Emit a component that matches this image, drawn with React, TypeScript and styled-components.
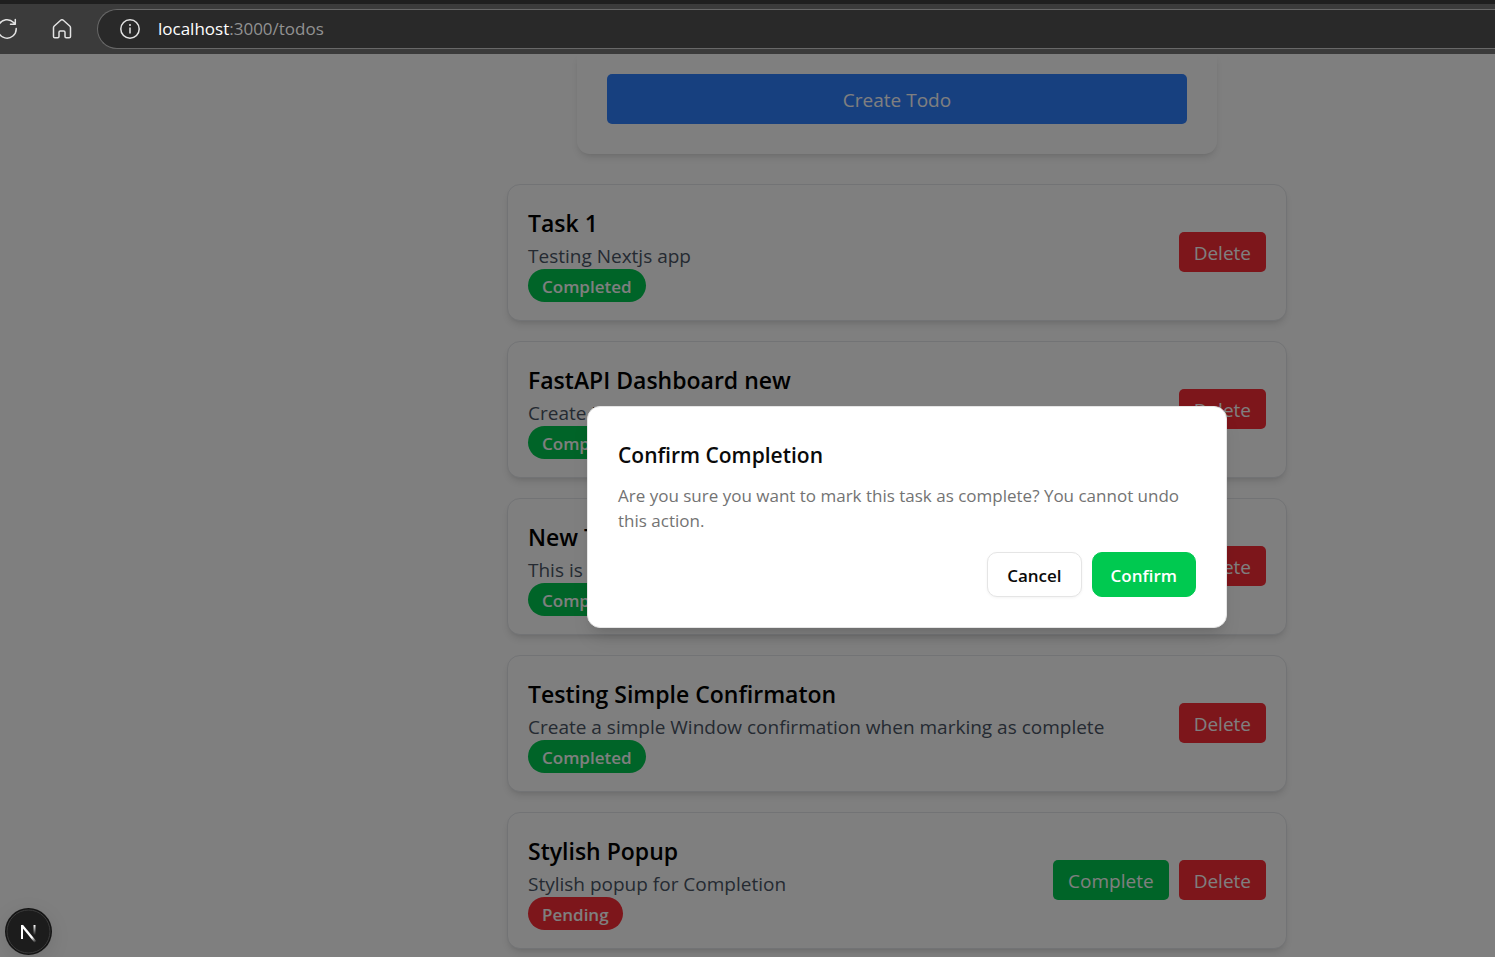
import React from "react";
import styled, { createGlobalStyle } from "styled-components";

const GlobalStyle = createGlobalStyle`
  *, *::before, *::after { box-sizing: border-box; }
  html, body { margin: 0; height: 100%; overflow: hidden; }
  body { font-family: "Open Sans", "Noto Sans", sans-serif; background: #fff; color: #000; }
  #root { height: 100%; }
  h2, p, ul { margin: 0; padding: 0; }
  button { font-family: inherit; cursor: pointer; }
`;

const Browser = styled.div`
  height: 100%;
  display: flex;
  flex-direction: column;
`;

const Toolbar = styled.header`
  flex: none;
  display: flex;
  align-items: center;
  height: 54px;
  border-top: 4px solid #1f1f1f;
  background: #3b3b3b;
  overflow: hidden;
`;

const ToolButton = styled.button<{ $clipped?: boolean }>`
  flex: none;
  display: flex;
  padding: 0;
  margin-left: ${(p) => (p.$clipped ? "-4px" : "34px")};
  border: 0;
  background: none;
  color: #e3e3e3;
`;

const AddressBar = styled.div`
  flex: 1;
  display: flex;
  align-items: center;
  gap: 18px;
  height: 40px;
  margin-left: 25px;
  padding-left: 22px;
  border: 1px solid #686868;
  border-right: 0;
  border-radius: 20px 0 0 20px;
  background: #292929;
  color: #e3e3e3;
`;

const Address = styled.a`
  font-size: 17px;
  line-height: 24px;
  color: #929292;
  text-decoration: none;
`;

const Host = styled.span`
  color: #fff;
`;

const Viewport = styled.div`
  flex: 1;
  min-height: 0;
  position: relative;
  overflow: hidden;
`;

const Page = styled.main`
  display: flex;
  flex-direction: column;
  align-items: center;
  gap: 30px;
  padding-left: 299px;
`;

const FormCard = styled.form`
  width: 100%;
  max-width: 640px;
  padding: 20px 30px 30px;
  border-radius: 0 0 13px 13px;
  background: #fff;
  box-shadow: 0 5px 8px -1px rgba(0, 0, 0, 0.1), 0 3px 5px -3px rgba(0, 0, 0, 0.1);
`;

const palette = { blue: "#2f80ff", green: "#00c950", red: "#fb2c36" };
type Tone = keyof typeof palette;

const Action = styled.button<{ $tone: Tone; $wide?: boolean }>`
  display: block;
  width: ${(p) => (p.$wide ? "100%" : "auto")};
  padding: ${(p) => (p.$wide ? "11px 10px 9px" : "6px 15px 4px")};
  border: 0;
  border-radius: 5px;
  background: ${(p) => palette[p.$tone]};
  color: #fff;
  font-size: 19px;
  line-height: 30px;
`;

const List = styled.ul`
  display: flex;
  flex-direction: column;
  gap: 20px;
  width: 100%;
  max-width: 780px;
  list-style: none;
`;

const Card = styled.li`
  display: flex;
  align-items: center;
  justify-content: space-between;
  padding: 21px 20px 19px;
  border: 1px solid #e5e7eb;
  border-radius: 13px;
  background: #fff;
  box-shadow: 0 5px 8px -1px rgba(0, 0, 0, 0.1), 0 3px 5px -3px rgba(0, 0, 0, 0.1);
`;

const Title = styled.h2`
  font-size: 23px;
  line-height: 35px;
  font-weight: 600;
`;

const Description = styled.p`
  font-size: 19px;
  line-height: 30px;
  color: #4a5565;
`;

const Badge = styled.span<{ $tone: Tone }>`
  display: block;
  width: fit-content;
  margin: -2px 0 -1px;
  padding: 6px 14px 4px;
  border-radius: 17px;
  background: ${(p) => palette[p.$tone]};
  color: #fff;
  font-size: 17px;
  line-height: 23px;
  font-weight: 600;
`;

const Actions = styled.div`
  display: flex;
  gap: 10px;
  padding-bottom: 3px;
`;

const Overlay = styled.div`
  position: absolute;
  inset: 0;
  display: flex;
  align-items: center;
  justify-content: center;
  padding: 23px 0 0 319px;
  background: rgba(0, 0, 0, 0.5);
`;

const Dialog = styled.section`
  display: flex;
  flex-direction: column;
  gap: 19px;
  width: 100%;
  max-width: 640px;
  padding: 31px 30px 30px;
  border: 1px solid #e5e5e5;
  border-radius: 13px;
  background: #fff;
  box-shadow: 0 13px 19px -4px rgba(0, 0, 0, 0.1), 0 5px 8px -5px rgba(0, 0, 0, 0.1);
`;

const DialogText = styled.div`
  display: flex;
  flex-direction: column;
  gap: 10px;
`;

const DialogTitle = styled.h2`
  font-size: 21px;
  line-height: 35px;
  font-weight: 600;
  color: #0a0a0a;
`;

const DialogBody = styled.p`
  font-size: 17px;
  line-height: 25px;
  color: #737373;
`;

const DialogActions = styled.div`
  display: flex;
  justify-content: flex-end;
  gap: 10px;
`;

const DialogButton = styled.button<{ $primary?: boolean }>`
  height: 45px;
  padding: 2px ${(p) => (p.$primary ? "18px" : "19px")} 0;
  border: 1px solid ${(p) => (p.$primary ? palette.green : "#e5e5e5")};
  border-radius: 10px;
  background: ${(p) => (p.$primary ? palette.green : "#fff")};
  color: ${(p) => (p.$primary ? "#fff" : "#0a0a0a")};
  box-shadow: ${(p) => (p.$primary ? "none" : "0 1px 3px rgba(0, 0, 0, 0.05)")};
  font-size: 17px;
  line-height: 25px;
  font-weight: 600;
`;

const DevBadge = styled.button`
  position: absolute;
  left: 5px;
  bottom: 2px;
  display: flex;
  padding: 0;
  border: 0;
  border-radius: 50%;
  background: none;
  box-shadow: 0 5px 20px rgba(0, 0, 0, 0.1);
`;

const todos = [
  { title: "Task 1", text: "Testing Nextjs app", done: true },
  { title: "FastAPI Dashboard new", text: "Create Nextjs app that runs called", done: true },
  { title: "New Task", text: "This is a new task", done: true },
  {
    title: "Testing Simple Confirmaton",
    text: "Create a simple Window confirmation when marking as complete",
    done: true,
  },
  { title: "Stylish Popup", text: "Stylish popup for Completion", done: false },
];

const ReloadIcon = () => (
  <svg width="22" height="22" viewBox="0 0 22 22" fill="none" stroke="currentColor" strokeWidth="1.5" strokeLinecap="round" strokeLinejoin="round">
    <path d="M20.2 10.5a9.2 9.2 0 1 1-2.6-6l1.7 1.8M19.3 1.5v4.8h-4.8" />
  </svg>
);

const HomeIcon = () => (
  <svg width="20" height="20" viewBox="0 0 20 20" fill="none" stroke="currentColor" strokeWidth="1.5" strokeLinejoin="round">
    <path d="M1.5 8.7c0-.7.3-1.2.8-1.7l6.4-5.7a2 2 0 0 1 2.6 0l6.4 5.7c.5.5.8 1 .8 1.7v8.8c0 .8-.5 1.3-1.3 1.3h-3c-.7 0-1.2-.5-1.2-1.2v-4.3c0-.8-.5-1.3-1.3-1.3H8.300c-.8 0-1.3.5-1.3 1.3v4.3c0 .7-.5 1.2-1.2 1.2h-3c-.8 0-1.3-.5-1.3-1.3z" />
  </svg>
);

const InfoIcon = () => (
  <svg width="20" height="20" viewBox="0 0 20 20" fill="none" stroke="currentColor" strokeWidth="1.5">
    <circle cx="10" cy="10" r="9.2" />
    <path d="M10 8.5v6" />
    <circle cx="10" cy="6" r="1" fill="currentColor" stroke="none" />
  </svg>
);

const NextLogo = () => (
  <svg width="47" height="47" viewBox="0 0 47 47" fill="none">
    <defs>
      <linearGradient id="diagonal" x1="24" y1="24" x2="31" y2="34" gradientUnits="userSpaceOnUse">
        <stop offset="0.5" stopColor="#fff" />
        <stop offset="1" stopColor="#fff" stopOpacity="0" />
      </linearGradient>
      <linearGradient id="stem" x1="30" y1="17" x2="30" y2="27" gradientUnits="userSpaceOnUse">
        <stop offset="0" stopColor="#fff" />
        <stop offset="1" stopColor="#fff" stopOpacity="0" />
      </linearGradient>
    </defs>
    <circle cx="23.5" cy="23.5" r="23.5" fill="#141414" />
    <circle cx="23.5" cy="23.5" r="21.5" fill="#1c1c1c" stroke="#3b3b3b" />
    <path d="M17 31V17" stroke="#fff" strokeWidth="2" />
    <path d="M17 17.5L30.5 34" stroke="url(#diagonal)" strokeWidth="2.4" />
    <path d="M29.5 17v10" stroke="url(#stem)" strokeWidth="2" />
  </svg>
);

export default function App() {
  return (
    <Browser>
      <GlobalStyle />
      <Toolbar>
        <ToolButton $clipped aria-label="Reload">
          <ReloadIcon />
        </ToolButton>
        <ToolButton aria-label="Home">
          <HomeIcon />
        </ToolButton>
        <AddressBar>
          <InfoIcon />
          <Address href="#todos">
            <Host>localhost</Host>:3000/todos
          </Address>
        </AddressBar>
      </Toolbar>
      <Viewport>
        <Page>
          <FormCard onSubmit={(e) => e.preventDefault()}>
            <Action $tone="blue" $wide type="submit">
              Create Todo
            </Action>
          </FormCard>
          <List>
            {todos.map((todo) => (
              <Card key={todo.title}>
                <div>
                  <Title>{todo.title}</Title>
                  <Description>{todo.text}</Description>
                  <Badge $tone={todo.done ? "green" : "red"}>{todo.done ? "Completed" : "Pending"}</Badge>
                </div>
                <Actions>
                  {!todo.done && <Action $tone="green">Complete</Action>}
                  <Action $tone="red">Delete</Action>
                </Actions>
              </Card>
            ))}
          </List>
        </Page>
        <Overlay>
          <Dialog role="alertdialog" aria-labelledby="dialog-title" aria-describedby="dialog-body">
            <DialogText>
              <DialogTitle id="dialog-title">Confirm Completion</DialogTitle>
              <DialogBody id="dialog-body">
                Are you sure you want to mark this task as complete? You cannot undo this action.
              </DialogBody>
            </DialogText>
            <DialogActions>
              <DialogButton>Cancel</DialogButton>
              <DialogButton $primary>Confirm</DialogButton>
            </DialogActions>
          </Dialog>
        </Overlay>
        <DevBadge aria-label="Open Next.js Dev Tools">
          <NextLogo />
        </DevBadge>
      </Viewport>
    </Browser>
  );
}
